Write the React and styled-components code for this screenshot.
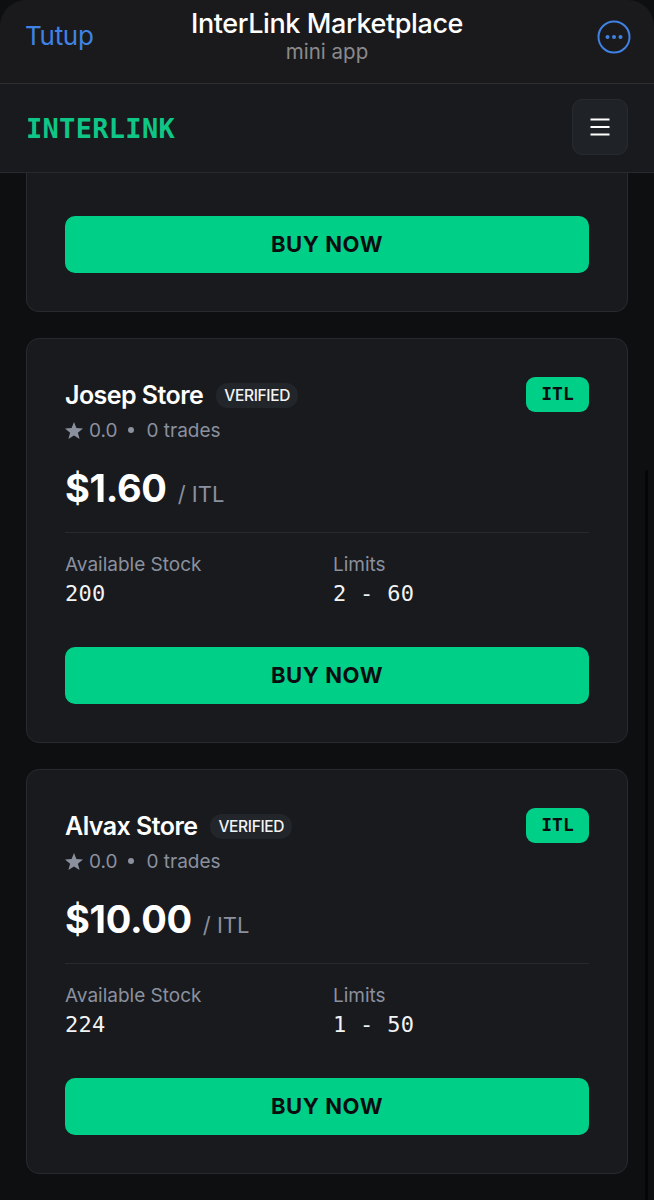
import React from 'react';
import styled, { createGlobalStyle } from 'styled-components';

const GlobalStyle = createGlobalStyle`
  html, body {
    margin: 0;
    padding: 0;
    background: #0e0f11;
  }
  * {
    box-sizing: border-box;
  }
`;

const Page = styled.div`
  position: relative;
  width: 654px;
  height: 1200px;
  overflow: hidden;
  background: #0e0f11;
  font-family: Inter, "Liberation Sans", sans-serif;
`;

const TopBar = styled.div`
  height: 84px;
  padding: 0 23px 0 25px;
  display: grid;
  grid-template-columns: 1fr auto 1fr;
  align-items: center;
  background: #1a1a1c;
  border-bottom: 1px solid #2e2f31;
  border-radius: 26px 26px 0 0;
`;

const CloseLink = styled.span`
  font-size: 26px;
  color: #3f82e4;
  letter-spacing: -0.3px;
  padding-bottom: 13px;
`;

const TitleBlock = styled.div`
  display: flex;
  flex-direction: column;
  align-items: center;
  margin-right: 2px;
  padding-bottom: 11px;
`;

const AppTitle = styled.div`
  font-size: 27px;
  line-height: 32px;
  font-weight: 500;
  color: #ffffff;
  letter-spacing: -0.4px;
`;

const AppSub = styled.div`
  font-size: 20.5px;
  line-height: 24px;
  color: #8a8a8c;
`;

const MoreButton = styled.div`
  justify-self: end;
  display: flex;
  padding-bottom: 10px;
`;

const Header = styled.header`
  height: 89px;
  padding: 0 26px 0 26px;
  display: flex;
  align-items: center;
  justify-content: space-between;
  background: #181a1e;
  border-bottom: 1px solid #272a2f;
`;

const Logo = styled.div`
  font-family: "DejaVu Sans Mono", "Liberation Mono", monospace;
  font-size: 27px;
  font-weight: 700;
  color: #0fc686;
  letter-spacing: 0.3px;
`;

const MenuButton = styled.div`
  width: 56px;
  height: 56px;
  margin-bottom: 2px;
  display: flex;
  align-items: center;
  justify-content: center;
  background: #1f2227;
  border: 1px solid #272a2f;
  border-radius: 10px;
`;

const List = styled.main`
  padding: 0 26px;
  display: flex;
  flex-direction: column;
  gap: 26px;
`;

const CardShell = styled.section`
  background: #181a1e;
  border: 1px solid #272a2f;
  border-radius: 13px;
`;

/* first card is scrolled under the header, only its button shows */
const ClippedCard = styled(CardShell)`
  border-top: none;
  border-radius: 0 0 13px 13px;
  padding: 43px 38px 38px;
`;

const Card = styled(CardShell)`
  padding: 38px 38px 38px;
`;

const TopRow = styled.div`
  display: flex;
  justify-content: space-between;
  align-items: flex-start;
`;

const NameRow = styled.div`
  display: flex;
  align-items: center;
  gap: 13px;
  height: 36px;
`;

const StoreName = styled.span`
  font-size: 25px;
  font-weight: 600;
  color: #ffffff;
  letter-spacing: -0.55px;
`;

const Verified = styled.span`
  height: 25px;
  padding: 0 8px;
  display: flex;
  align-items: center;
  font-size: 15.5px;
  font-weight: 500;
  color: #f2f3f5;
  background: #22252a;
  border-radius: 12px;
  letter-spacing: -0.35px;
`;

const Token = styled.span`
  width: 63px;
  height: 35px;
  padding-bottom: 2px;
  display: flex;
  align-items: center;
  justify-content: center;
  font-family: "DejaVu Sans Mono", "Liberation Mono", monospace;
  font-size: 18px;
  font-weight: 700;
  color: #0b0c0f;
  background: #00cf88;
  border-radius: 9px;
`;

const Meta = styled.div`
  display: flex;
  align-items: center;
  margin-top: 5px;
  height: 24px;
  font-size: 19px;
  color: #8b909e;
`;

const RatingValue = styled.span`
  margin-left: 6px;
`;

const Dot = styled.span`
  width: 6px;
  height: 6px;
  margin: 0 12px 0 11px;
  border-radius: 50%;
  background: #8b909e;
`;

const PriceRow = styled.div`
  display: flex;
  align-items: baseline;
  gap: 11px;
  margin-top: 20px;
  height: 52px;
`;

const Price = styled.span`
  font-size: 38px;
  font-weight: 700;
  line-height: 52px;
  color: #ffffff;
  letter-spacing: -0.3px;
`;

const PriceUnit = styled.span`
  font-size: 22px;
  color: #8b909e;
`;

const Divider = styled.hr`
  margin: 18px 0 0;
  border: none;
  height: 1px;
  background: #272a2f;
`;

const Stats = styled.div`
  display: grid;
  grid-template-columns: 268px 1fr;
  margin-top: 20px;
`;

const StatLabel = styled.div`
  font-size: 19px;
  line-height: 24px;
  color: #8b909e;
`;

const StatValue = styled.div`
  margin-top: 3px;
  font-family: "DejaVu Sans Mono", "Liberation Mono", monospace;
  font-size: 22px;
  line-height: 28px;
  color: #f2f3f5;
  letter-spacing: 0.3px;
  white-space: pre;
`;

const BuyButton = styled.button`
  display: block;
  width: 100%;
  height: 57px;
  padding: 0 0 1px;
  border: none;
  border-radius: 10px;
  background: #00cf88;
  color: #0b0c0f;
  font-family: inherit;
  font-size: 22px;
  font-weight: 700;
  letter-spacing: 0.6px;
`;

const StatsButton = styled(BuyButton)`
  margin-top: 39px;
`;

const ScrollThumb = styled.div`
  position: absolute;
  top: 470px;
  bottom: 0;
  right: 6px;
  width: 3px;
  border-radius: 2px 2px 0 0;
  background: #060607;
`;

const stores = [
  { name: 'Josep Store', price: '$1.60', stock: '200', limits: '2 - 60' },
  { name: 'Alvax Store', price: '$10.00', stock: '224', limits: '1 - 50' },
];

const MoreIcon = () => (
  <svg width="34" height="34" viewBox="0 0 34 34" fill="none">
    <circle cx="17" cy="17" r="15.5" stroke="#3f82e4" strokeWidth="2" />
    <circle cx="10.5" cy="17" r="2" fill="#3f82e4" />
    <circle cx="17" cy="17" r="2" fill="#3f82e4" />
    <circle cx="23.5" cy="17" r="2" fill="#3f82e4" />
  </svg>
);

const MenuIcon = () => (
  <svg width="20" height="20" viewBox="0 0 20 20" fill="none">
    <path d="M0.5 2.5h19M0.5 10h19M0.5 17.5h19" stroke="#ffffff" strokeWidth="2" />
  </svg>
);

const StarIcon = () => (
  <svg width="18" height="17" viewBox="0 0 18 17">
    <path d="M9 0l2.4 6.1 6.6.4-5.1 4.2 1.7 6.3L9 13.5 3.4 17l1.7-6.3L0 6.5l6.6-.4z" fill="#8b909e" />
  </svg>
);

const StoreCard = ({ store }) => (
  <Card>
    <TopRow>
      <NameRow>
        <StoreName>{store.name}</StoreName>
        <Verified>VERIFIED</Verified>
      </NameRow>
      <Token>ITL</Token>
    </TopRow>
    <Meta>
      <StarIcon />
      <RatingValue>0.0</RatingValue>
      <Dot />
      <span>0 trades</span>
    </Meta>
    <PriceRow>
      <Price>{store.price}</Price>
      <PriceUnit>/ ITL</PriceUnit>
    </PriceRow>
    <Divider />
    <Stats>
      <div>
        <StatLabel>Available Stock</StatLabel>
        <StatValue>{store.stock}</StatValue>
      </div>
      <div>
        <StatLabel>Limits</StatLabel>
        <StatValue>{store.limits}</StatValue>
      </div>
    </Stats>
    <StatsButton>BUY NOW</StatsButton>
  </Card>
);

const App = () => {
  return (
    <Page>
      <GlobalStyle />
      <TopBar>
        <CloseLink>Tutup</CloseLink>
        <TitleBlock>
          <AppTitle>InterLink Marketplace</AppTitle>
          <AppSub>mini app</AppSub>
        </TitleBlock>
        <MoreButton>
          <MoreIcon />
        </MoreButton>
      </TopBar>
      <Header>
        <Logo>INTERLINK</Logo>
        <MenuButton>
          <MenuIcon />
        </MenuButton>
      </Header>
      <List>
        <ClippedCard>
          <BuyButton>BUY NOW</BuyButton>
        </ClippedCard>
        {stores.map((store) => (
          <StoreCard key={store.name} store={store} />
        ))}
      </List>
      <ScrollThumb />
    </Page>
  );
};

export default App;
